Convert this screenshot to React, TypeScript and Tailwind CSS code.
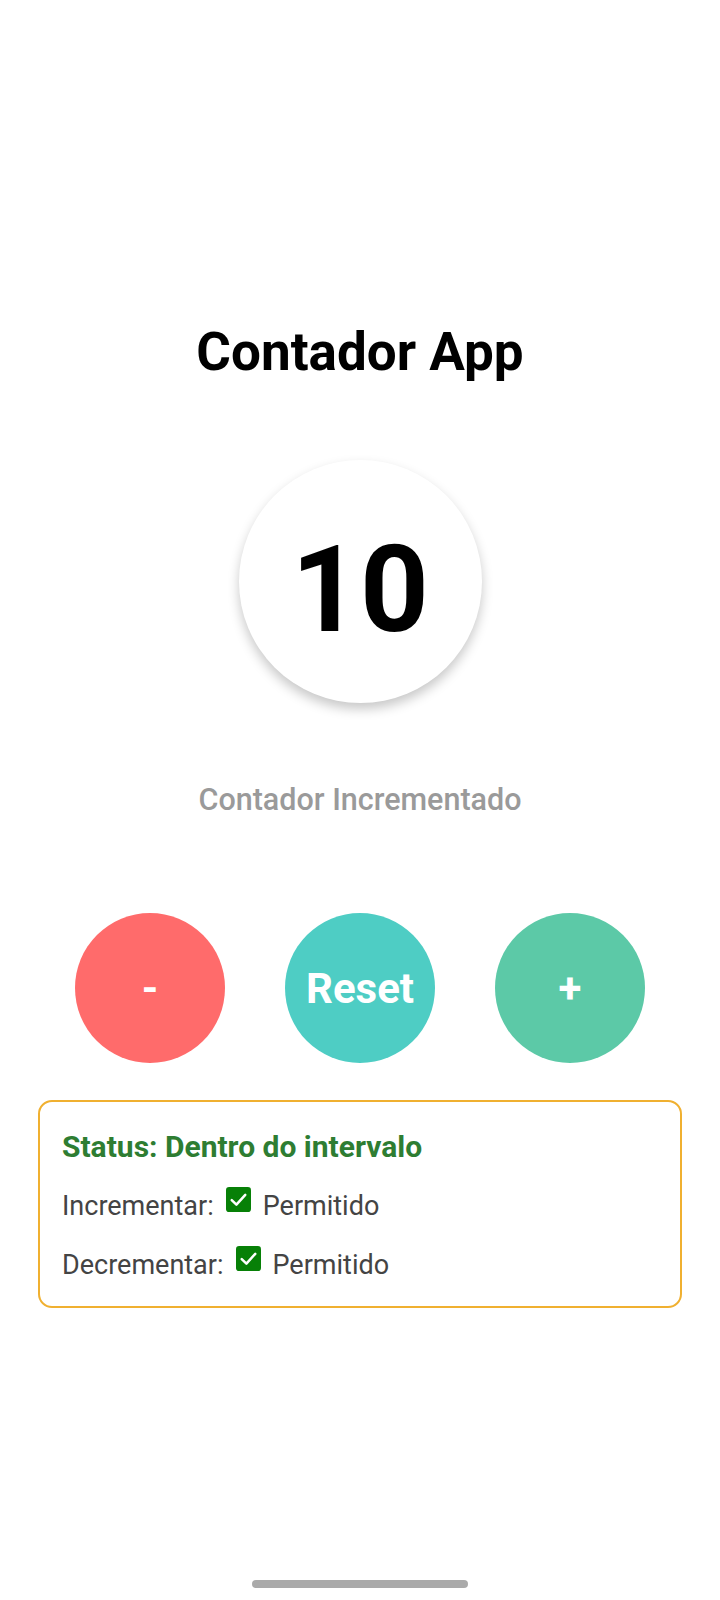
import React from "react";

function Check() {
  return (
    <svg width="25" height="25" viewBox="0 0 24 24" className="block">
      <rect x="0" y="0" width="24" height="24" rx="3" fill="#078007" />
      <path d="M5.5 12.5 L10 17 L18.5 7.5" stroke="#fff" strokeWidth="2.4" fill="none" strokeLinecap="round" strokeLinejoin="round" />
    </svg>
  );
}

export default function App() {
  return (
    <div
      className="w-[720px] h-[1600px] bg-white flex flex-col items-center relative"
      style={{ fontFamily: "Roboto, 'Noto Sans', sans-serif" }}
    >
      <h1 className="mt-[318px] text-[53px] leading-[68px] font-bold text-black">Contador App</h1>
      <div className="mt-[74px] w-[243px] h-[243px] rounded-full bg-white shadow-[0_6px_12px_rgba(0,0,0,0.22)] flex items-center justify-center">
        <span className="pt-[16px] text-[120px] leading-none font-bold text-black">10</span>
      </div>
      <p className="mt-[77px] text-[30.5px] leading-[40px] font-medium text-[#9a9a9a]">Contador Incrementado</p>
      <div className="mt-[93px] flex gap-[60px]">
        <button className="w-[150px] h-[150px] rounded-full bg-[#ff6b6b] text-white text-[42px] font-bold flex items-center justify-center">-</button>
        <button className="w-[150px] h-[150px] rounded-full bg-[#4ecdc4] text-white text-[42px] font-bold flex items-center justify-center">Reset</button>
        <button className="w-[150px] h-[150px] rounded-full bg-[#5cc9a7] text-white text-[42px] font-bold flex items-center justify-center">+</button>
      </div>
      <div className="mt-[37px] w-[644px] border-2 border-[#f0b030] rounded-[14px] px-[22px] pt-[25px] pb-[21px] flex flex-col gap-[19px]">
        <div className="text-[30px] leading-[40px] font-bold text-[#2e7d32]">Status: Dentro do intervalo</div>
        <div className="text-[27px] leading-[40px] text-[#444444] flex items-center gap-[12px]">
          <span>Incrementar:</span>
          <span className="-mt-[14px]"><Check /></span>
          <span>Permitido</span>
        </div>
        <div className="text-[27px] leading-[40px] text-[#444444] flex items-center gap-[12px]">
          <span>Decrementar:</span>
          <span className="-mt-[14px]"><Check /></span>
          <span>Permitido</span>
        </div>
      </div>
      <div className="absolute bottom-[12px] left-[252px] w-[216px] h-[8px] rounded-full bg-[#aaaaaa]" />
    </div>
  );
}
